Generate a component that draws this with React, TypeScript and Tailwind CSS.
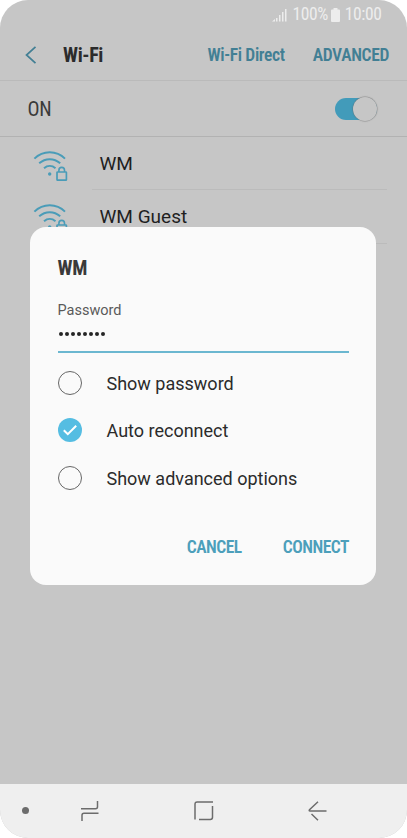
import React from 'react';

const networks = ['WM', 'WM Guest'];

const options = [
  { label: 'Show password', checked: false },
  { label: 'Auto reconnect', checked: true },
  { label: 'Show advanced options', checked: false },
];

const SecuredWifiIcon: React.FC = () => (
  <svg width="36" height="32" viewBox="0 0 36 32" fill="none" stroke="#4a9cb8" className="mt-[11.500px] shrink-0">
    <path d="M2.4 9.6C11 1.200 24.500 1.200 33 9.600" strokeWidth="2" />
    <path d="M7.200 14.300c6.200-5.500 14.800-5.500 21 0" strokeWidth="2" />
    <path d="M12 19.200c3.500-3 8-3 11.500 0" strokeWidth="2" />
    <circle cx="17.700" cy="25" r="1.700" fill="#4a9cb8" stroke="none" />
    <rect x="25" y="23" width="9.400" height="8.200" rx=".6" strokeWidth="1.700" />
    <path d="M26.900 23v-1.800a2.800 2.800 0 0 1 5.600 0V23" strokeWidth="1.600" />
  </svg>
);

const StatusBar: React.FC = () => (
  <div className="flex h-[29px] items-center justify-end pr-[25.500px] text-[17.500px] tracking-[-0.4px] text-[#ededed]">
    <svg width="15" height="14" viewBox="0 0 15 14" fill="#ededed" className="mr-[5px]">
      <path d="M0 13.500L3 11v2.500zM4 10h1.500v3.500H4zM7 7h1.500v6.500H7zM10 4h1.500v9.500H10zM13 1h1.500v12.500H13z" />
    </svg>
    <span className="font-stretch-75%">100%</span>
    <svg width="9" height="14" viewBox="0 0 9 14" fill="#ededed" className="mr-[5px] ml-[3px]">
      <path d="M2.500 0h4v1.500H8a1 1 0 0 1 1 1V13a1 1 0 0 1-1 1H1a1 1 0 0 1-1-1V2.500a1 1 0 0 1 1-1h1.500z" />
    </svg>
    <span className="font-stretch-75%">10:00</span>
  </div>
);

const PasswordDialog: React.FC = () => (
  <div className="absolute top-[226.500px] left-[30px] h-[358px] w-[346px] rounded-2xl bg-[#fafafa] pr-[27px] pl-[27.500px]">
    <h2 className="pt-[29.500px] text-[20px] leading-6 font-bold tracking-[-0.3px] text-[#3a3a3a] font-stretch-75%">WM</h2>
    <p className="mt-[21px] text-[14.500px] leading-5 text-[#5a5a5a]">Password</p>
    <div className="flex h-8 gap-[2px] border-b-2 border-[#6bb7d0] pt-[10.500px] pl-px">
      {Array.from({ length: 8 }, (_, i) => (
        <span key={i} className="size-1 rounded-full bg-[#252525]" />
      ))}
    </div>
    <ul className="pt-[6px]">
      {options.map((option) => (
        <li key={option.label} className="flex h-[47.500px] items-center">
          {option.checked ? (
            <span className="flex size-6 items-center justify-center rounded-full bg-[#55bde2]">
              <svg width="14" height="11" viewBox="0 0 14 11" fill="none" stroke="#fff" strokeWidth="2">
                <path d="M.8 5.200l4 4L13.200.8" />
              </svg>
            </span>
          ) : (
            <span className="size-6 rounded-full border border-[#666]" />
          )}
          <span className="ml-[25px] pt-px text-[18px] text-[#2b2b2b]">{option.label}</span>
        </li>
      ))}
    </ul>
    <div className="mt-[33px] flex justify-end gap-[41px] text-[17.500px] leading-6 font-semibold tracking-[-0.5px] text-[#4c9fbb]">
      <button className="font-stretch-75%">CANCEL</button>
      <button className="font-stretch-75%">CONNECT</button>
    </div>
  </div>
);

const NavigationBar: React.FC = () => (
  <div className="mt-auto flex h-[54.500px] items-center bg-[#efefef]">
    <span className="ml-[22px] size-[7px] rounded-full bg-[#6c6c6c]" />
    <svg width="18" height="20" viewBox="0 0 18 20" fill="none" stroke="#6c6c6c" strokeWidth="1.500" className="ml-[52px]">
      <path d="M0 7.800h14.500q2 0 2-2V0M17.500 12.200H3q-2 0-2 2V20" />
    </svg>
    <svg width="20" height="20" viewBox="0 0 20 20" fill="none" stroke="#6c6c6c" strokeWidth="1.500" className="ml-[95px]">
      <path d="M1 18.500V3.200Q1 1 3.200 1H19M18.500 5v11.300q0 2.200-2.200 2.200H5" />
    </svg>
    <svg width="19" height="20" viewBox="0 0 19 20" fill="none" stroke="#6c6c6c" strokeWidth="1.500" className="ml-[94px]">
      <path d="M10 .8L1.500 8.700q-.8 1.300.5 1.300h16.500M3.500 13l6.500 6.200" />
    </svg>
  </div>
);

const App: React.FC = () => {
  return (
    <div className="relative flex h-[838px] w-[407px] flex-col overflow-hidden rounded-[28px] bg-[#c6c6c6] font-['Roboto',sans-serif]">
      <StatusBar />

      {/* Header */}
      <div className="flex h-[52px] items-center border-b border-[#bababa] pr-[18px] pl-[25px] text-[17.500px] font-semibold tracking-[-0.35px] text-[#427f94]">
        <svg width="12" height="18" viewBox="0 0 12 18" fill="none" stroke="#427f94" strokeWidth="1.700">
          <path d="M10.500 .8L1.500 9l9 8.200" />
        </svg>
        <h1 className="ml-[26px] pt-px text-[20px] font-bold text-[#2b2b2b] font-stretch-75%">Wi-Fi</h1>
        <button className="ml-auto pt-px font-stretch-75%">Wi-Fi Direct</button>
        <button className="ml-7 pt-px font-stretch-75%">ADVANCED</button>
      </div>

      {/* Wi-Fi switch */}
      <div className="flex h-14 items-center justify-between border-b border-[#b2b2b2] pr-[30.500px] pl-[27.500px]">
        <span className="pt-px text-[20px] tracking-[-0.3px] text-[#3a3a3a] font-stretch-75%">ON</span>
        <span className="flex h-[22px] w-[42px] items-center justify-end rounded-full bg-[#429bba]">
          <span className="size-6 shrink-0 rounded-full bg-[#c6c6c6] shadow-[0_0_1px_0.5px_rgba(100,100,100,0.6)]" />
        </span>
      </div>

      {/* Available networks */}
      <ul>
        {networks.map((name) => (
          <li key={name} className="flex h-[53px] pl-8 not-first:h-[53.500px]">
            <SecuredWifiIcon />
            <span className="ml-6 flex w-[295px] items-center border-b border-[#bbb] pt-0.5 pl-[7.500px] text-[19px] text-[#1f1f1f]">
              {name}
            </span>
          </li>
        ))}
      </ul>

      <NavigationBar />
      <PasswordDialog />
    </div>
  );
};

export default App;
